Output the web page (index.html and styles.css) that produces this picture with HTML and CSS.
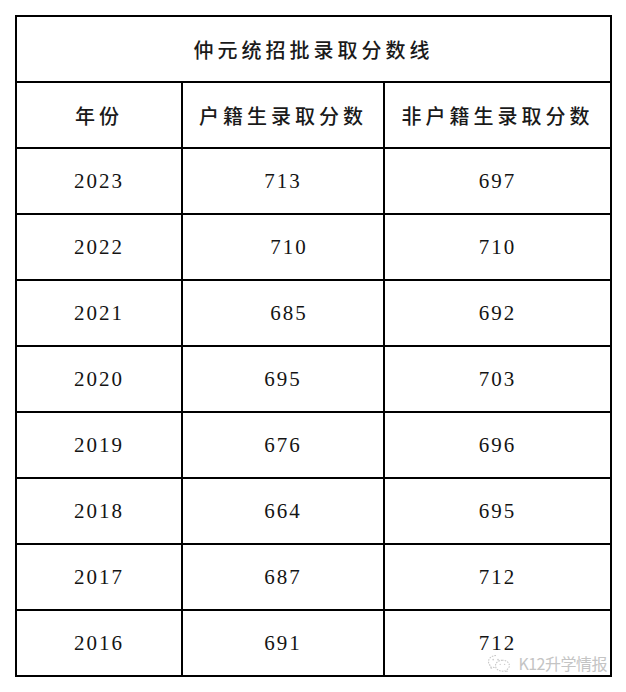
FILE: index.html
```html
<!DOCTYPE html>
<html lang="zh-CN">
<head>
<meta charset="utf-8">
<title>仲元统招批录取分数线</title>
<link rel="stylesheet" href="styles.css">
</head>
<body>
<div class="page">
  <table class="scores">
    <colgroup>
      <col class="c-year">
      <col class="c-local">
      <col class="c-nonlocal">
    </colgroup>
    <thead>
      <tr><th class="title" colspan="3">仲元统招批录取分数线</th></tr>
      <tr><th class="head">年份</th><th class="head">户籍生录取分数</th><th class="head">非户籍生录取分数</th></tr>
    </thead>
    <tbody>
      <tr><td>2023</td><td>713</td><td>697</td></tr>
      <tr><td>2022</td><td class="nudge">710</td><td>710</td></tr>
      <tr><td>2021</td><td class="nudge">685</td><td>692</td></tr>
      <tr><td>2020</td><td>695</td><td>703</td></tr>
      <tr><td>2019</td><td>676</td><td>696</td></tr>
      <tr><td>2018</td><td>664</td><td>695</td></tr>
      <tr><td>2017</td><td>687</td><td>712</td></tr>
      <tr><td>2016</td><td>691</td><td>712</td></tr>
    </tbody>
  </table>
  <div class="watermark">
    <svg class="wm-icon" viewBox="0 0 24 18" width="24" height="18" aria-hidden="true">
      <path d="M9 1.5C4.9 1.5 1.5 4.2 1.5 7.6c0 1.9 1 3.5 2.6 4.6L3.4 14.6l2.7-1.4c.9.3 1.9.4 2.9.4" fill="none" stroke="#c8c8c8" stroke-width="1.1" stroke-dasharray="1.6 1.1"/>
      <path d="M15.5 6.2c-3.9 0-7 2.5-7 5.5s3.1 5.5 7 5.5c.8 0 1.6-.1 2.3-.3l2.3 1.1-.6-2c1.6-1 2.9-2.6 2.9-4.3 0-3-3.1-5.5-6.9-5.5z" fill="none" stroke="#c8c8c8" stroke-width="1.1" stroke-dasharray="1.6 1.1"/>
      <circle cx="6.2" cy="5.6" r="0.9" fill="#cfcfcf"/>
      <circle cx="11" cy="5.6" r="0.9" fill="#cfcfcf"/>
      <circle cx="13.2" cy="10.4" r="0.7" fill="#cfcfcf"/>
      <circle cx="17.6" cy="10.4" r="0.7" fill="#cfcfcf"/>
    </svg>
    <span class="wm-text">K12升学情报</span>
  </div>
</div>
</body>
</html>
```

FILE: styles.css
```css
html, body {
  margin: 0;
  padding: 0;
  background: #ffffff;
}

.page {
  position: relative;
  padding: 15px;
  width: 595px;
}

.scores {
  border-collapse: collapse;
  table-layout: fixed;
  width: 595px;
  color: #141414;
}

.c-year { width: 166px; }
.c-local { width: 202px; }
.c-nonlocal { width: 227px; }

.scores th,
.scores td {
  border: 2px solid #000;
  height: 64px;
  padding: 0;
  text-align: center;
  vertical-align: middle;
}

.scores th {
  font-family: "Noto Sans CJK SC", "Noto Sans", sans-serif;
  font-weight: 500;
  font-size: 20px;
  letter-spacing: 4px;
  color: #1a1a1a;
}

.scores td {
  font-family: "Liberation Serif", "DejaVu Serif", serif;
  font-size: 21px;
  letter-spacing: 2px;
  font-weight: 400;
}

.scores td.nudge {
  padding-left: 12px;
}

.watermark {
  position: absolute;
  right: 18px;
  bottom: 20px;
  display: flex;
  align-items: center;
  gap: 7px;
}

.wm-icon {
  display: block;
}

.wm-text {
  font-family: "Noto Sans CJK SC", "Noto Sans", sans-serif;
  font-size: 16px;
  line-height: 16px;
  color: #c4c4c4;
  letter-spacing: -0.5px;
}
```
